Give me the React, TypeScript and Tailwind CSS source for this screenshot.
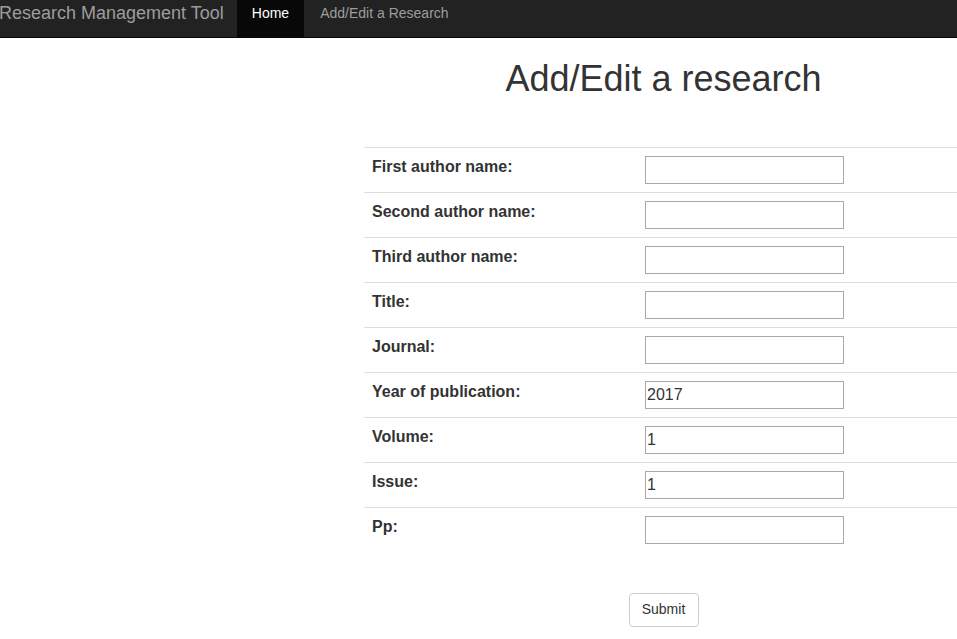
import React from 'react'

const fields: { label: string; value?: string }[] = [
    { label: 'First author name:' },
    { label: 'Second author name:' },
    { label: 'Third author name:' },
    { label: 'Title:' },
    { label: 'Journal:' },
    { label: 'Year of publication:', value: '2017' },
    { label: 'Volume:', value: '1' },
    { label: 'Issue:', value: '1' },
    { label: 'Pp:' },
]

function Navbar() {
    return (
        <nav className="flex h-[38px] items-stretch border-b border-[#080808] bg-[#222222]">
            <a className="pt-[3px] pr-[13px] -ml-[1px] text-[18px] leading-[20px] text-[#9d9d9d]">
                Research Management Tool
            </a>
            <a className="bg-[#080808] px-[15px] pt-[3px] text-[14px] leading-[20px] text-white">Home</a>
            <a className="px-[16px] pt-[3px] text-[14px] leading-[20px] text-[#9d9d9d]">Add/Edit a Research</a>
        </nav>
    )
}

function FieldRow({ label, value }: { label: string; value?: string }) {
    return (
        <div className="flex border-t border-[#dddddd]">
            <div className="w-[273px] px-2 pt-[7px]">
                <label className="text-[16px] font-bold leading-[22.85px] text-[#333333]">{label}</label>
            </div>
            <div className="p-2">
                <input
                    type="text"
                    defaultValue={value}
                    className="block h-[28px] w-[199px] border border-[#a9a9a9] px-[1px] text-[16px] text-[#333333] outline-none"
                />
            </div>
        </div>
    )
}

export default function App() {
    return (
        <div className="min-h-[639px] w-full overflow-hidden bg-white font-['Liberation_Sans',Arial,sans-serif] text-[#333333]">
            <Navbar />
            <div className="ml-[364px] w-[599px]">
                <h1 className="mt-[21px] text-center text-[36px] leading-[39.6px]">Add/Edit a research</h1>
                <form className="mt-[48px]" onSubmit={(e) => e.preventDefault()}>
                    <div className="flex flex-col">
                        {fields.map((f) => (
                            <FieldRow key={f.label} label={f.label} value={f.value} />
                        ))}
                    </div>
                    <div className="mt-[41px] flex justify-center">
                        <button
                            type="submit"
                            className="h-[34px] w-[70px] rounded-[4px] border border-[#cccccc] bg-white text-[14px] text-[#333333]"
                        >
                            Submit
                        </button>
                    </div>
                </form>
            </div>
        </div>
    )
}
